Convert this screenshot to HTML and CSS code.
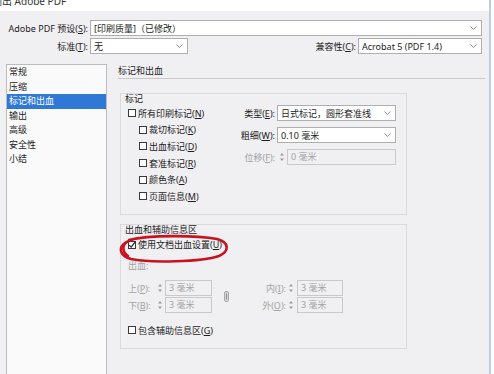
FILE: index.html
```html
<html>
<head>
<link rel="stylesheet" href="styles.css">
</head>
<body>
<div class="window">
	<div class="titlebar"><span>输出 Adobe PDF</span></div>
	<div class="dialog">
		<div class="row">
			<label class="lbl">Adobe PDF 预设(<u>S</u>):</label>
			<div class="select grow"><span>[印刷质量]（已修改）</span><svg class="caret" width="7" height="4" viewBox="0 0 7 4"><path d="M0.5 0.5L3.5 3.5L6.5 0.5"/></svg></div>
		</div>
		<div class="row">
			<label class="lbl">标准(<u>T</u>):</label>
			<div class="select std"><span>无</span><svg class="caret" width="7" height="4" viewBox="0 0 7 4"><path d="M0.5 0.5L3.5 3.5L6.5 0.5"/></svg></div>
			<label class="lbl-compat">兼容性(<u>C</u>):</label>
			<div class="select compat"><span>Acrobat 5 (PDF 1.4)</span><svg class="caret" width="7" height="4" viewBox="0 0 7 4"><path d="M0.5 0.5L3.5 3.5L6.5 0.5"/></svg></div>
		</div>
		<div class="main">
			<ul class="nav">
				<li>常规</li>
				<li>压缩</li>
				<li class="selected">标记和出血</li>
				<li>输出</li>
				<li>高级</li>
				<li>安全性</li>
				<li>小结</li>
			</ul>
			<div class="pane">
				<div class="pane-title">标记和出血</div>
				<div class="group marks">
					<div class="group-title">标记</div>
					<div class="marks-body">
						<div class="checks">
							<div class="check"><i class="box"></i>所有印刷标记(<u>N</u>)</div>
							<div class="check sub"><i class="box"></i>裁切标记(<u>K</u>)</div>
							<div class="check sub"><i class="box"></i>出血标记(<u>D</u>)</div>
							<div class="check sub"><i class="box"></i>套准标记(<u>R</u>)</div>
							<div class="check sub"><i class="box"></i>颜色条(<u>A</u>)</div>
							<div class="check sub"><i class="box"></i>页面信息(<u>M</u>)</div>
						</div>
						<div class="fields">
							<label>类型(<u>E</u>):</label>
							<div class="select"><span>日式标记，圆形套准线</span><svg class="caret" width="7" height="4" viewBox="0 0 7 4"><path d="M0.5 0.5L3.5 3.5L6.5 0.5"/></svg></div>
							<label>粗细(<u>W</u>):</label>
							<div class="select"><span>0.10 毫米</span><svg class="caret" width="7" height="4" viewBox="0 0 7 4"><path d="M0.5 0.5L3.5 3.5L6.5 0.5"/></svg></div>
							<label class="off">位移(<u>F</u>):</label>
							<div class="spin-field">
								<svg class="spin" width="6" height="14" viewBox="0 0 6 14"><path d="M3 3L5 5.5H1Z M3 11L5 8.5H1Z"/></svg>
								<div class="input">0 毫米</div>
							</div>
						</div>
					</div>
				</div>
				<div class="group bleed">
					<div class="group-title">出血和辅助信息区</div>
					<div class="check on"><i class="box"><svg width="8" height="8" viewBox="0 0 8 8"><path d="M1.2 4.2L3.2 6.2L7 1.2"/></svg></i>使用文档出血设置(<u>U</u>)</div>
					<div class="bleed-label">出血:</div>
					<div class="bleed-grid">
						<label>上(<u>P</u>):</label>
						<svg class="spin" width="6" height="14" viewBox="0 0 6 14"><path d="M3 3L5 5.5H1Z M3 11L5 8.5H1Z"/></svg>
						<div class="input">3 毫米</div>
						<svg class="chain" width="5" height="11" viewBox="0 0 5 11"><rect x="0.5" y="0.5" width="4" height="10" rx="1.5"/><path d="M2.5 2.5V8.5"/></svg>
						<label class="right">内(<u>I</u>):</label>
						<svg class="spin" width="6" height="14" viewBox="0 0 6 14"><path d="M3 3L5 5.5H1Z M3 11L5 8.5H1Z"/></svg>
						<div class="input">3 毫米</div>
						<label>下(<u>B</u>):</label>
						<svg class="spin" width="6" height="14" viewBox="0 0 6 14"><path d="M3 3L5 5.5H1Z M3 11L5 8.5H1Z"/></svg>
						<div class="input">3 毫米</div>
						<label class="right">外(<u>O</u>):</label>
						<svg class="spin" width="6" height="14" viewBox="0 0 6 14"><path d="M3 3L5 5.5H1Z M3 11L5 8.5H1Z"/></svg>
						<div class="input">3 毫米</div>
					</div>
					<div class="check last"><i class="box"></i>包含辅助信息区(<u>G</u>)</div>
					<svg class="circle" width="118" height="32" viewBox="0 0 118 32"><path d="M10 6C30 1 76 1 98 5C110 8 111 17 100 22C83 28 30 29 12 25C1 22 -1 14 6 9C9 7 14 5 20 4"/><path d="M8 8C3 11 3 18 9 22"/></svg>
				</div>
			</div>
		</div>
	</div>
</div>
</body>
</html>
```

FILE: styles.css
```css
html,body {
	margin: 0;
	padding: 0;
}
body {
	width: 494px;
	height: 374px;
	overflow: hidden;
	background: #fff;
	font-family: "Noto Sans", "Noto Sans CJK SC", sans-serif;
	font-size: 9px;
	color: #1c1c1c;
}
u {
	text-decoration: underline;
}
.window {
	width: 489px;
	height: 100%;
	border-right: 2px solid #b9cde6;
	display: flex;
	flex-direction: column;
	background: #f0eff2;
}
.titlebar {
	height: 11px;
	background: #fff;
	overflow: hidden;
}
.titlebar span {
	display: block;
	font-size: 10px;
	line-height: 10px;
	margin-top: -4px;
	margin-left: -8px;
	color: #333;
}
.dialog {
	flex: 1;
	display: flex;
	flex-direction: column;
	padding: 9px 7px 0 6px;
	min-height: 0;
}
.row {
	display: flex;
	align-items: center;
	height: 16px;
	margin-bottom: 2px;
}
.lbl {
	width: 82px;
	text-align: right;
	margin-right: 2px;
	white-space: nowrap;
}
.lbl-compat {
	margin-left: auto;
	margin-right: 2px;
}
.select {
	box-sizing: border-box;
	height: 16px;
	border: 1px solid #aeaeae;
	background: #fff;
	display: flex;
	align-items: center;
	justify-content: space-between;
	padding: 0 4px 0 3px;
	white-space: nowrap;
}
.select.grow {
	flex: 1;
}
.select.std {
	width: 98px;
}
.select.compat {
	width: 124px;
}
.caret path {
	fill: none;
	stroke: #8c8c8c;
}

.main {
	flex: 1;
	display: flex;
	margin-top: 8px;
	min-height: 0;
}
.nav {
	box-sizing: border-box;
	width: 101px;
	margin: 0;
	padding: 0;
	list-style: none;
	border: 1px solid #bcbcbc;
	border-bottom: none;
	background: #fafafb;
}
.nav li {
	height: 14.5px;
	line-height: 14.5px;
	padding-left: 2px;
}
.nav li.selected {
	background: #3078d6;
	color: #fff;
}
.pane {
	flex: 1;
	padding-left: 11px;
	margin-right: -3px;
}
.pane-title {
	line-height: 14px;
	border-bottom: 1px solid #c9c9c9;
}

.group {
	position: relative;
	box-sizing: border-box;
	width: 287px;
	margin-left: 2px;
	border: 1px solid #dadada;
	padding: 0 10px 9px 7px;
}
.group-title {
	line-height: 10px;
	margin-left: -3px;
}
.marks {
	margin-top: 14px;
}
.marks-body {
	display: flex;
	justify-content: space-between;
	margin-top: 1px;
}
.check {
	display: flex;
	align-items: center;
	height: 16.6px;
	white-space: nowrap;
}
.check.sub {
	padding-left: 11px;
}
.box {
	box-sizing: border-box;
	width: 8px;
	height: 8px;
	border: 1px solid #3a3a3a;
	background: #fff;
	margin-right: 2px;
	display: flex;
	align-items: center;
	justify-content: center;
}
.box svg {
	flex: none;
}
.box path {
	fill: none;
	stroke: #222;
	stroke-width: 1.2;
}
.fields {
	display: grid;
	grid-template-columns: auto 119px;
	column-gap: 2px;
	row-gap: 6px;
	grid-auto-rows: 16px;
	align-items: center;
	align-self: flex-start;
}
.fields label {
	text-align: right;
	white-space: nowrap;
}
.fields .off {
	color: #a3a3a3;
}
.spin-field {
	display: flex;
	align-items: center;
	height: 16px;
	padding-left: 2px;
}
.spin-field .input {
	flex: 1;
	margin-left: 2px;
}
.spin path {
	fill: #9a9a9a;
}
.input {
	box-sizing: border-box;
	height: 16px;
	line-height: 14px;
	border: 1px solid #c9c9c9;
	background: #f0eff2;
	color: #a3a3a3;
	padding-left: 3px;
	white-space: nowrap;
}

.bleed {
	margin-top: 9px;
}
.check.on {
	margin-top: 2px;
}
.bleed-label {
	color: #a3a3a3;
	line-height: 12px;
	margin-top: 7px;
}
.bleed-grid {
	display: grid;
	grid-template-columns: 29px 8px 47px 10px 8px 58px 9px 46px;
	grid-template-rows: 16px 16px;
	row-gap: 1px;
	align-items: center;
	margin-top: 8px;
	color: #a3a3a3;
}
.bleed-grid label {
	white-space: nowrap;
}
.bleed-grid label.right {
	text-align: right;
	padding-right: 2px;
	grid-column: 6;
}
.bleed-grid .chain {
	grid-column: 5;
	grid-row: 1 / span 2;
	margin-left: 2px;
}
.chain rect {
	fill: #d8d8d8;
	stroke: #a8a8a8;
}
.chain path {
	stroke: #8e8e8e;
}
.check.last {
	margin-top: 9px;
}
.circle {
	position: absolute;
	left: -2px;
	top: 9px;
}
.circle path {
	fill: none;
	stroke: #c8131f;
	stroke-width: 2.6;
	stroke-linecap: round;
}
```
